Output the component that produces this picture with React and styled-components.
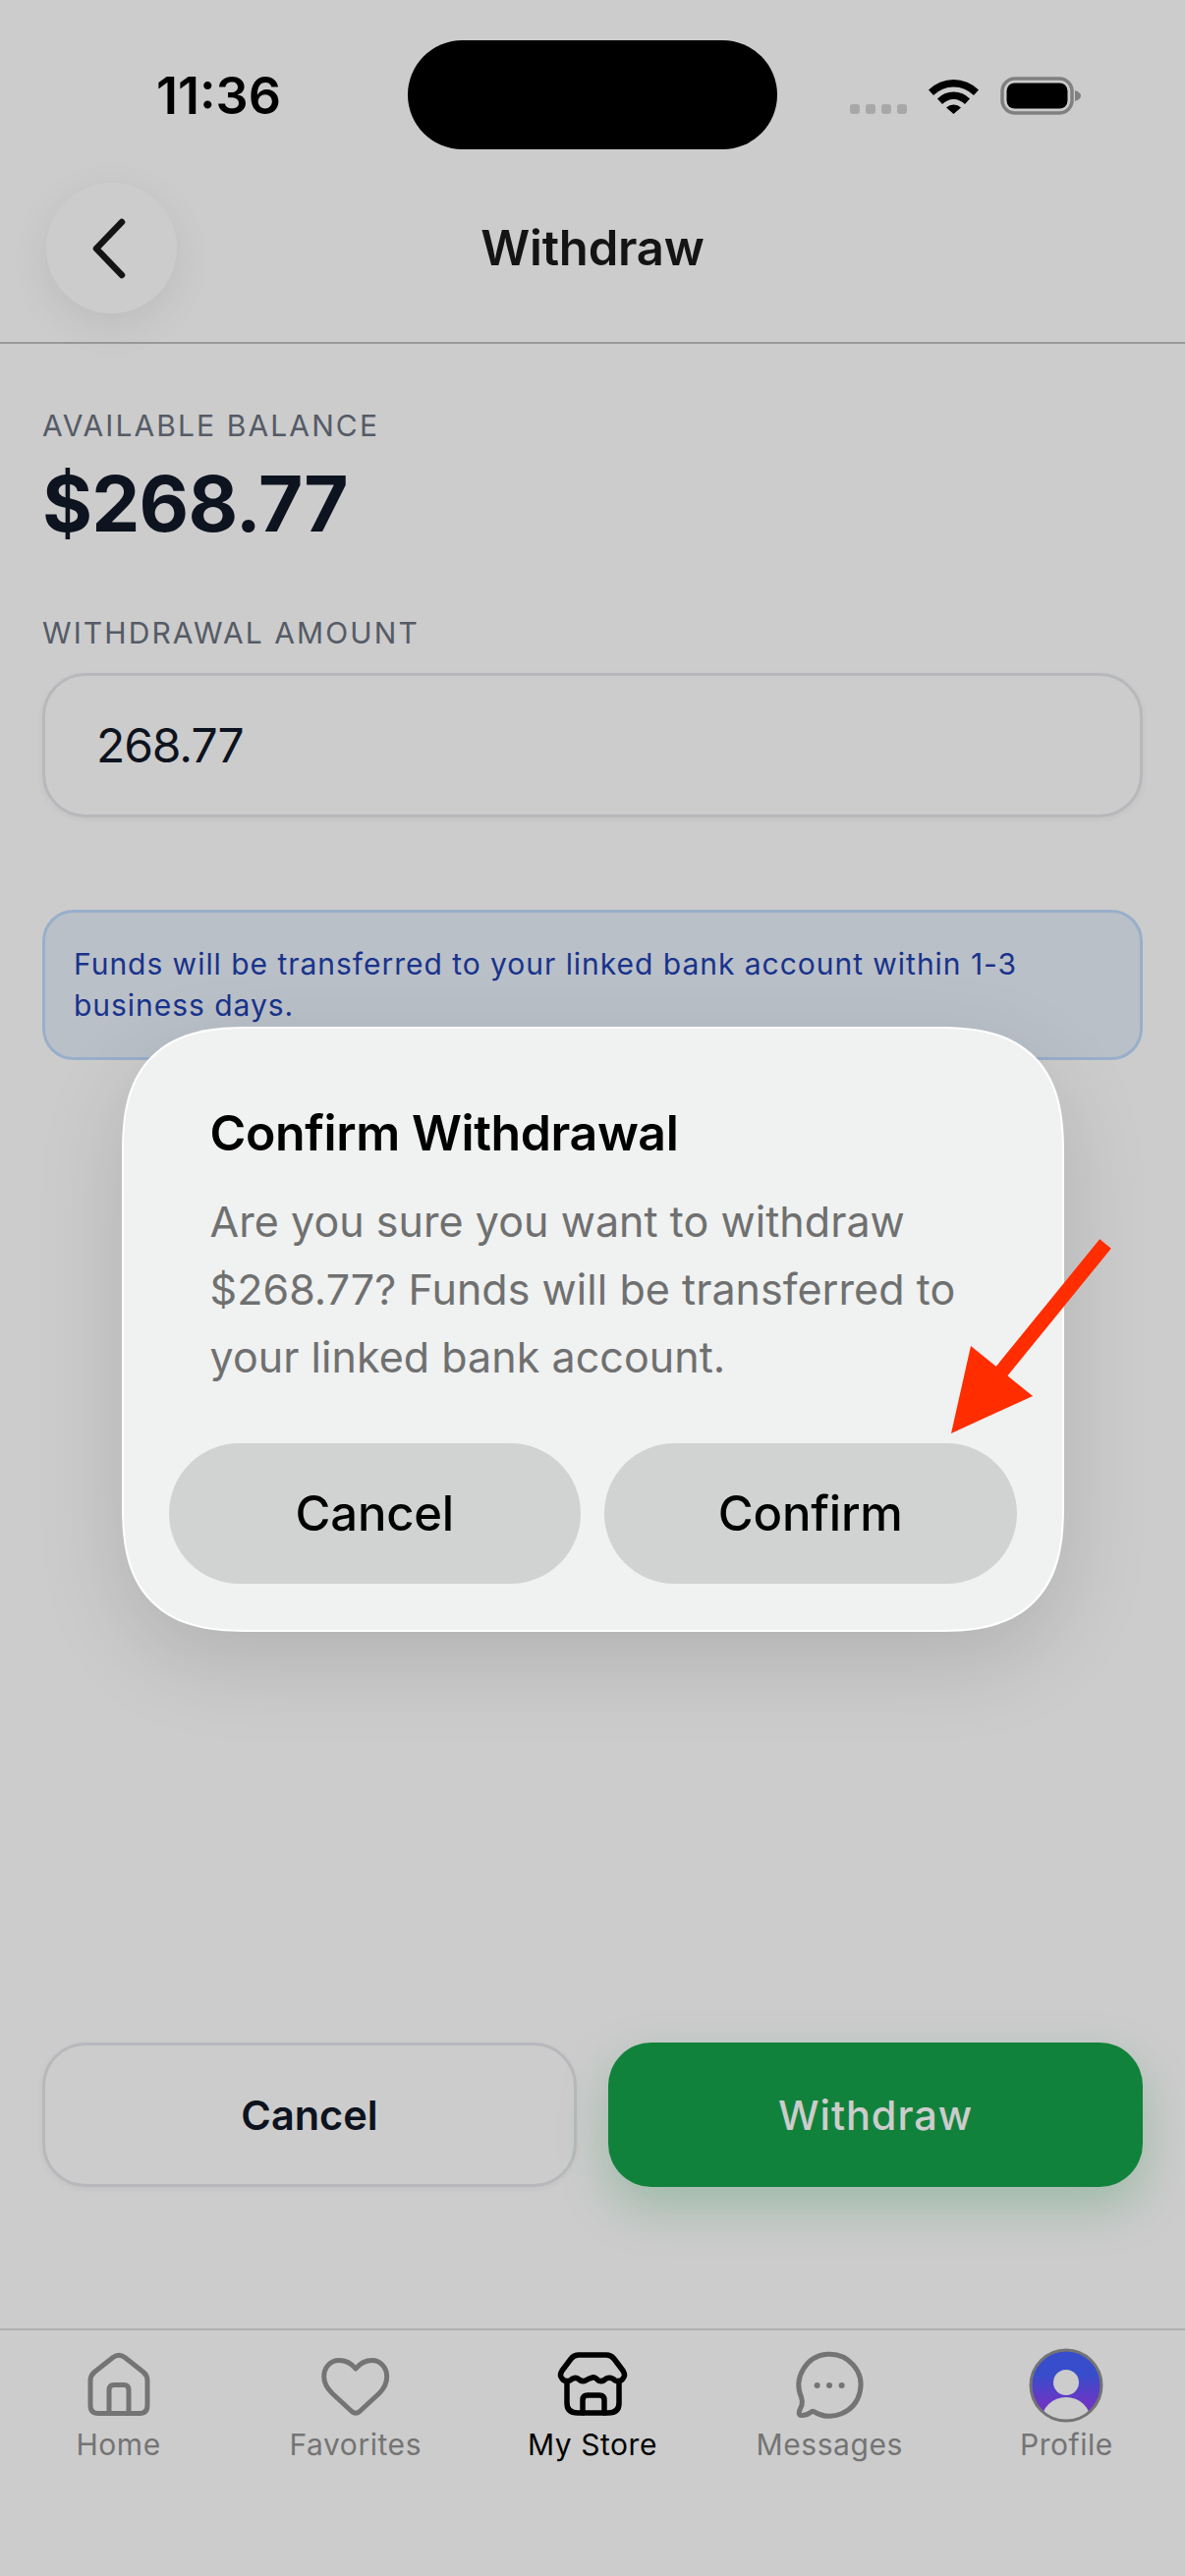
import React from "react";
import styled, { createGlobalStyle } from "styled-components";

const Global = createGlobalStyle`
  html, body { margin: 0; padding: 0; background: #fff; }
  * { box-sizing: border-box; }
  body { font-family: Inter, "Noto Sans", "Liberation Sans", sans-serif; }
`;

const Page = styled.div`
  position: relative;
  width: 1206px;
  height: 2622px;
  overflow: hidden;
  display: flex;
  flex-direction: column;
  background: #fff;
`;

const StatusBar = styled.div`
  display: grid;
  grid-template-columns: 415px 376px 415px;
  padding-top: 41px;
  height: 152px;
`;
const Time = styled.div`
  font-size: 52px;
  font-weight: 600;
  line-height: 113px;
  padding-left: 159px;
  color: #000;
`;
const Island = styled.div`
  height: 111px;
  border-radius: 56px;
  background: #000;
`;
const StatusIcons = styled.div`
  display: flex;
  align-items: flex-start;
  padding-left: 74px;
`;
const SignalDots = styled.div`
  display: flex;
  gap: 6px;
  margin-top: 65px;
  margin-right: 22px;
`;
const Dot = styled.i`
  width: 10px;
  height: 10px;
  border-radius: 3px;
  background: #d2d2d2;
`;
const Wifi = styled.svg`
  width: 51px;
  height: 37px;
  margin-top: 38px;
  margin-right: 22px;
`;
const Battery = styled.svg`
  width: 82px;
  height: 39px;
  margin-top: 37px;
`;

const Header = styled.header`
  margin-top: 34px;
  height: 164px;
  padding: 0 47px 32px;
  display: grid;
  grid-template-columns: 1fr auto 1fr;
  align-items: center;
  border-bottom: 2px solid #c0c0c0;
`;
const BackButton = styled.button`
  width: 133px;
  height: 133px;
  border: none;
  border-radius: 50%;
  background: #fff;
  box-shadow: 0 12px 40px rgba(0, 0, 0, 0.08);
  padding: 0 4px 0 0;
  display: flex;
  align-items: center;
  justify-content: center;
`;
const Title = styled.h1`
  margin: 0;
  font-size: 49px;
  font-weight: 600;
  letter-spacing: -0.2px;
  color: #1a1a1a;
`;

const Main = styled.main`
  flex: 1;
  display: flex;
  flex-direction: column;
  padding: 63px 43px 144px;
`;
const FieldLabel = styled.div`
  font-size: 30px;
  line-height: 40px;
  font-weight: 400;
  letter-spacing: 2.1px;
  color: #6b7280;
  margin-top: ${(p) => p.$top || 0}px;
`;
const Amount = styled.div`
  font-size: 78px;
  line-height: 90px;
  font-weight: 700;
  letter-spacing: -0.8px;
  color: #111827;
  margin-top: 15px;
`;
const AmountInput = styled.div`
  margin-top: 21px;
  height: 147px;
  border: 3px solid #e5e7eb;
  border-radius: 44px;
  padding: 0 52px;
  display: flex;
  align-items: center;
  font-size: 48px;
  letter-spacing: -1.1px;
  color: #111827;
  background: #fff;
  box-shadow: 0 2px 6px rgba(0, 0, 0, 0.05);
`;
const InfoBox = styled.div`
  margin-top: 94px;
  height: 153px;
  padding: 31px 29px;
  border: 3px solid #bfdbfe;
  border-radius: 32px;
  background: #e9f0fa;
  color: #1e40af;
  font-size: 30px;
  line-height: 42px;
  letter-spacing: 0.97px;
`;
const Actions = styled.div`
  margin-top: auto;
  display: grid;
  grid-template-columns: 544px 544px;
  justify-content: space-between;
`;
const ActionButton = styled.button`
  height: 147px;
  border-radius: 44px;
  font-family: inherit;
  font-size: 41.5px;
  font-weight: ${(p) => (p.$primary ? 500 : 600)};
  letter-spacing: ${(p) => (p.$primary ? "0.9px" : "0")};
  border: ${(p) => (p.$primary ? "none" : "3px solid #e5e7eb")};
  background: ${(p) => (p.$primary ? "#16a34a" : "#fff")};
  color: ${(p) => (p.$primary ? "#fff" : "#111827")};
  box-shadow: ${(p) =>
    p.$primary
      ? "0 20px 50px rgba(22, 163, 74, 0.25)"
      : "0 2px 6px rgba(0, 0, 0, 0.05)"};
`;

const TabBar = styled.nav`
  height: 252px;
  border-top: 2px solid #dcdcdc;
  display: grid;
  grid-template-columns: repeat(5, 1fr);
  padding-top: 18px;
`;
const Tab = styled.div`
  display: flex;
  flex-direction: column;
  align-items: center;
  color: ${(p) => (p.$active ? "#000" : "#929292")};
`;
const TabIcon = styled.svg`
  width: 76px;
  height: 76px;
  display: block;
`;
const TabLabel = styled.span`
  margin-top: 2px;
  font-size: 30px;
  line-height: 40px;
  letter-spacing: 0.55px;
`;

const Overlay = styled.div`
  position: absolute;
  inset: 0;
  background: rgba(0, 0, 0, 0.2);
  display: flex;
  justify-content: center;
  padding-top: 1045px;
`;
const Modal = styled.div`
  width: 959px;
  height: 616px;
  border-radius: 105px;
  background: #f0f1f1;
  border: 2px solid #fff;
  padding: 74px 46px 0;
  box-shadow: 0 30px 90px rgba(0, 0, 0, 0.13);
  @supports (corner-shape: squircle) {
    border-radius: 130px;
    corner-shape: superellipse(1.4);
  }
`;
const ModalTitle = styled.h2`
  margin: 0;
  padding-left: 42px;
  font-size: 50px;
  line-height: 64px;
  font-weight: 600;
  color: #000;
  letter-spacing: -0.4px;
`;
const ModalText = styled.p`
  margin: 24px 0 0;
  padding-left: 42px;
  font-size: 43px;
  line-height: 69px;
  letter-spacing: 0.05px;
  color: #6f7070;
`;
const ModalActions = styled.div`
  margin-top: 53px;
  display: grid;
  grid-template-columns: 1fr 1fr;
  gap: 24px;
`;
const ModalButton = styled.button`
  height: 143px;
  border: none;
  border-radius: 72px;
  background: #d1d3d3;
  color: #000;
  font-family: inherit;
  font-size: 49px;
  font-weight: 500;
  letter-spacing: -0.2px;
`;
const Arrow = styled.svg`
  position: absolute;
  left: 950px;
  top: 1250px;
  width: 200px;
  height: 230px;
`;

const Home = () => (
  <TabIcon viewBox="0 0 76 76" fill="none" stroke="currentColor" strokeWidth="5" strokeLinejoin="round">
    <path d="M32 9.5 Q38 5 44 9.5 L63 24.5 Q67 28 67 33 V58 Q67 66.5 59 66.5 H17 Q9 66.5 9 58 V33 Q9 28 13 24.5 Z" />
    <path d="M28 66.5 V43 Q28 37.5 33 37.5 H43 Q48 37.5 48 43 V66.5" />
  </TabIcon>
);
const Heart = () => (
  <TabIcon viewBox="0 0 76 76" fill="none" stroke="currentColor" strokeWidth="5" strokeLinejoin="round">
    <path d="M38 21 C34 16 28 12.5 21 12.5 C12 12.5 5.7 20 5.7 29 C5.7 36 9 41 14 46 L34 64.5 Q38 68 42 64.5 L62 46 C67 41 69.7 36 69.7 29 C69.7 20 63 12.5 55 12.5 C48 12.5 42 16 38 21 Z" />
  </TabIcon>
);
const Store = () => (
  <TabIcon viewBox="0 0 76 76" fill="none" stroke="currentColor" strokeWidth="5.5" strokeLinejoin="round" strokeLinecap="round">
    <path d="M24 7 H52 Q57 7 60 11 L69 23 Q72 28 69 31 Q66 35 61 33 Q57 29 52 31 Q48 35 44 33 Q40 29 38 30 Q34 31 31 33 Q27 35 23 31 Q19 29 15 33 Q10 35 7 31 Q4 28 7 23 L16 11 Q19 7 24 7 Z" />
    <path d="M12 34 V56 Q12 66 23 66 H54 Q65 66 65 56 V34" />
    <path d="M28 66 V53 Q28 48 33 48 H45 Q50 48 50 53 V66" />
  </TabIcon>
);
const Chat = () => (
  <TabIcon viewBox="0 0 76 76" fill="none" stroke="currentColor" strokeWidth="5" strokeLinejoin="round">
    <path d="M22 64.5 A31.5 31.5 0 1 0 9.5 50 Q11 54 10 58 L7.5 64 Q6 69 11 68.5 Q16 68 19 65.5 Q20.5 64 22 64.5 Z" />
    <g fill="currentColor" stroke="none">
      <circle cx="25.6" cy="38" r="3" />
      <circle cx="38" cy="38" r="3" />
      <circle cx="50.6" cy="38" r="3" />
    </g>
  </TabIcon>
);
const Avatar = () => (
  <TabIcon viewBox="0 0 76 76">
    <defs>
      <linearGradient id="avatarFill" x1="0" y1="0" x2="0" y2="1">
        <stop offset="0.35" stopColor="#4661ff" />
        <stop offset="0.75" stopColor="#8744f5" />
      </linearGradient>
      <clipPath id="avatarClip">
        <circle cx="38" cy="38" r="36" />
      </clipPath>
    </defs>
    <circle cx="38" cy="38" r="36" fill="url(#avatarFill)" />
    <g clipPath="url(#avatarClip)" fill="#fff">
      <circle cx="38" cy="35" r="13" />
      <ellipse cx="38" cy="74" rx="25" ry="24" />
    </g>
    <circle cx="38" cy="38" r="36" fill="none" stroke="#929292" strokeWidth="3" />
  </TabIcon>
);

const tabs = [
  { label: "Home", Icon: Home },
  { label: "Favorites", Icon: Heart },
  { label: "My Store", Icon: Store, active: true },
  { label: "Messages", Icon: Chat },
  { label: "Profile", Icon: Avatar },
];

export default function App() {
  return (
    <Page>
      <Global />
      <StatusBar>
        <Time>11:36</Time>
        <Island />
        <StatusIcons>
          <SignalDots>
            <Dot /><Dot /><Dot /><Dot />
          </SignalDots>
          <Wifi viewBox="0 0 51 37">
            <path d="M0 12.5 A36 36 0 0 1 51 12.5 L46 18 A29 29 0 0 0 5 18 Z" fill="#000" />
            <path d="M9 21.5 A23 23 0 0 1 42 21.5 L37 27 A16 16 0 0 0 14 27 Z" fill="#000" />
            <path d="M18 30.5 A11 11 0 0 1 33 30.5 L25.5 37 Z" fill="#000" />
          </Wifi>
          <Battery viewBox="0 0 82 39">
            <rect x="2" y="2" width="71" height="35" rx="13" fill="none" stroke="#a0a0a0" strokeWidth="3.5" />
            <rect x="6.5" y="6.5" width="62" height="26" rx="8" fill="#000" />
            <path d="M76 14 Q82 16 82 19.5 Q82 23 76 25 Z" fill="#a0a0a0" />
          </Battery>
        </StatusIcons>
      </StatusBar>

      <Header>
        <BackButton aria-label="Back">
          <svg width="44" height="64" viewBox="0 0 44 64" fill="none" stroke="#1a1a1a" strokeWidth="6.5" strokeLinecap="round" strokeLinejoin="round">
            <path d="M34 5 L8 32 L34 59" />
          </svg>
        </BackButton>
        <Title>Withdraw</Title>
        <span />
      </Header>

      <Main>
        <FieldLabel>AVAILABLE BALANCE</FieldLabel>
        <Amount>$268.77</Amount>
        <FieldLabel $top={66}>WITHDRAWAL AMOUNT</FieldLabel>
        <AmountInput>268.77</AmountInput>
        <InfoBox>Funds will be transferred to your linked bank account within 1-3 business days.</InfoBox>
        <Actions>
          <ActionButton>Cancel</ActionButton>
          <ActionButton $primary>Withdraw</ActionButton>
        </Actions>
      </Main>

      <TabBar>
        {tabs.map(({ label, Icon, active }) => (
          <Tab key={label} $active={active}>
            <Icon />
            <TabLabel>{label}</TabLabel>
          </Tab>
        ))}
      </TabBar>

      <Overlay>
        <Modal>
          <ModalTitle>Confirm Withdrawal</ModalTitle>
          <ModalText>Are you sure you want to withdraw $268.77? Funds will be transferred to your linked bank account.</ModalText>
          <ModalActions>
            <ModalButton>Cancel</ModalButton>
            <ModalButton>Confirm</ModalButton>
          </ModalActions>
        </Modal>
      </Overlay>

      <Arrow viewBox="0 0 200 230">
        <path d="M175 16 L66 150" stroke="#ff2d00" strokeWidth="15" fill="none" />
        <path d="M18 209 L38 120 L101 171 Z" fill="#ff2d00" />
      </Arrow>
    </Page>
  );
}
